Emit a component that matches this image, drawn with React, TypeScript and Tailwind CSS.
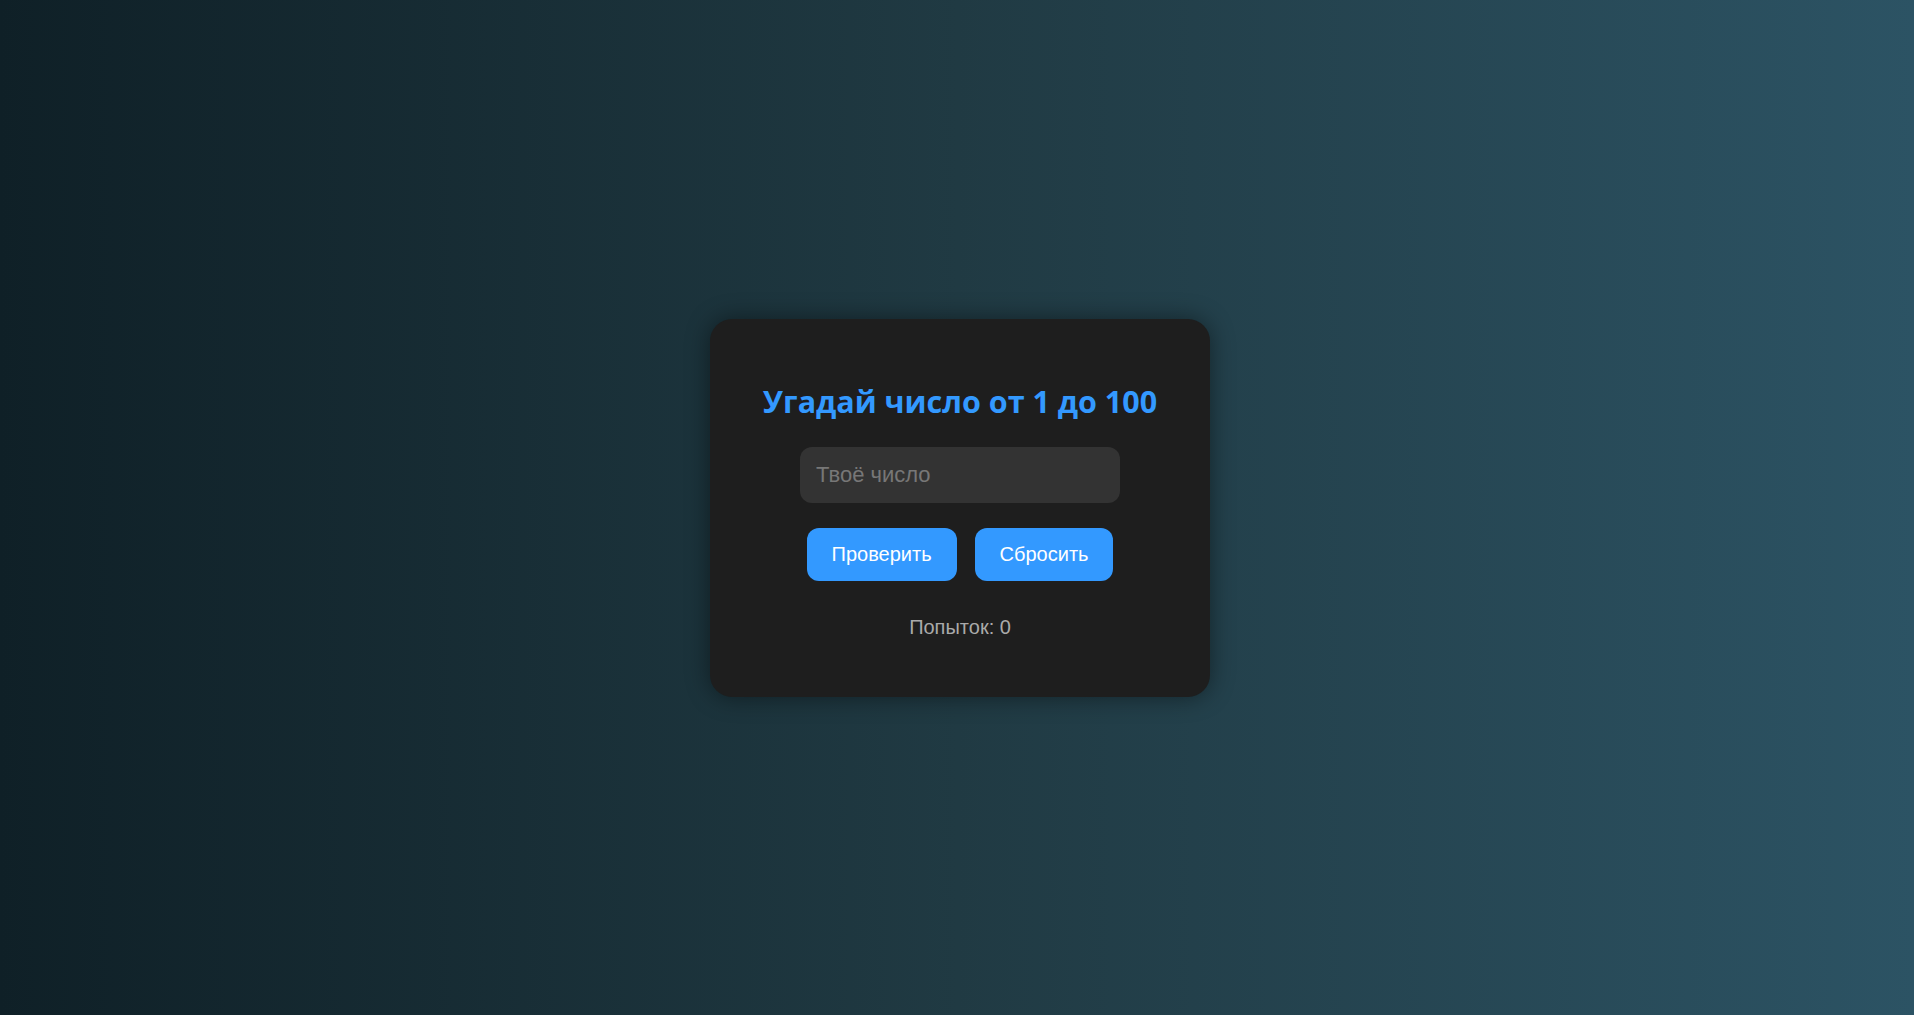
import React from "react";

export default function App() {
  return (
    <div className="w-full h-[1015px] bg-linear-to-r from-[#0f2027] via-[#203a43] to-[#2c5364] flex items-center justify-center font-['Liberation_Sans',Arial,sans-serif]">
      <div className="ml-[6px] w-[500px] h-[378px] rounded-[22px] bg-[#1e1e1e] shadow-[0_0_24px_rgba(0,0,0,0.45)] flex flex-col items-center pt-[62px]">
        <h1 className="text-[30.5px] leading-[40px] font-bold text-[#3399ff] font-['Open_Sans','Noto_Sans',sans-serif]">
          Угадай число от 1 до 100
        </h1>
        <input
          type="text"
          placeholder="Твоё число"
          className="mt-[26px] w-[320px] h-[56px] rounded-[12px] bg-[#333333] px-[16px] text-[22px] text-white placeholder:text-[#777777] outline-none"
        />
        <div className="mt-[25px] flex gap-[18px]">
          <button className="h-[53px] px-[25px] rounded-[12px] bg-[#3399ff] text-white text-[20px]">Проверить</button>
          <button className="h-[53px] px-[25px] rounded-[12px] bg-[#3399ff] text-white text-[20px]">Сбросить</button>
        </div>
        <p className="mt-[31px] text-[20px] leading-[30px] text-[#aaaaaa]">Попыток: 0</p>
      </div>
    </div>
  );
}
